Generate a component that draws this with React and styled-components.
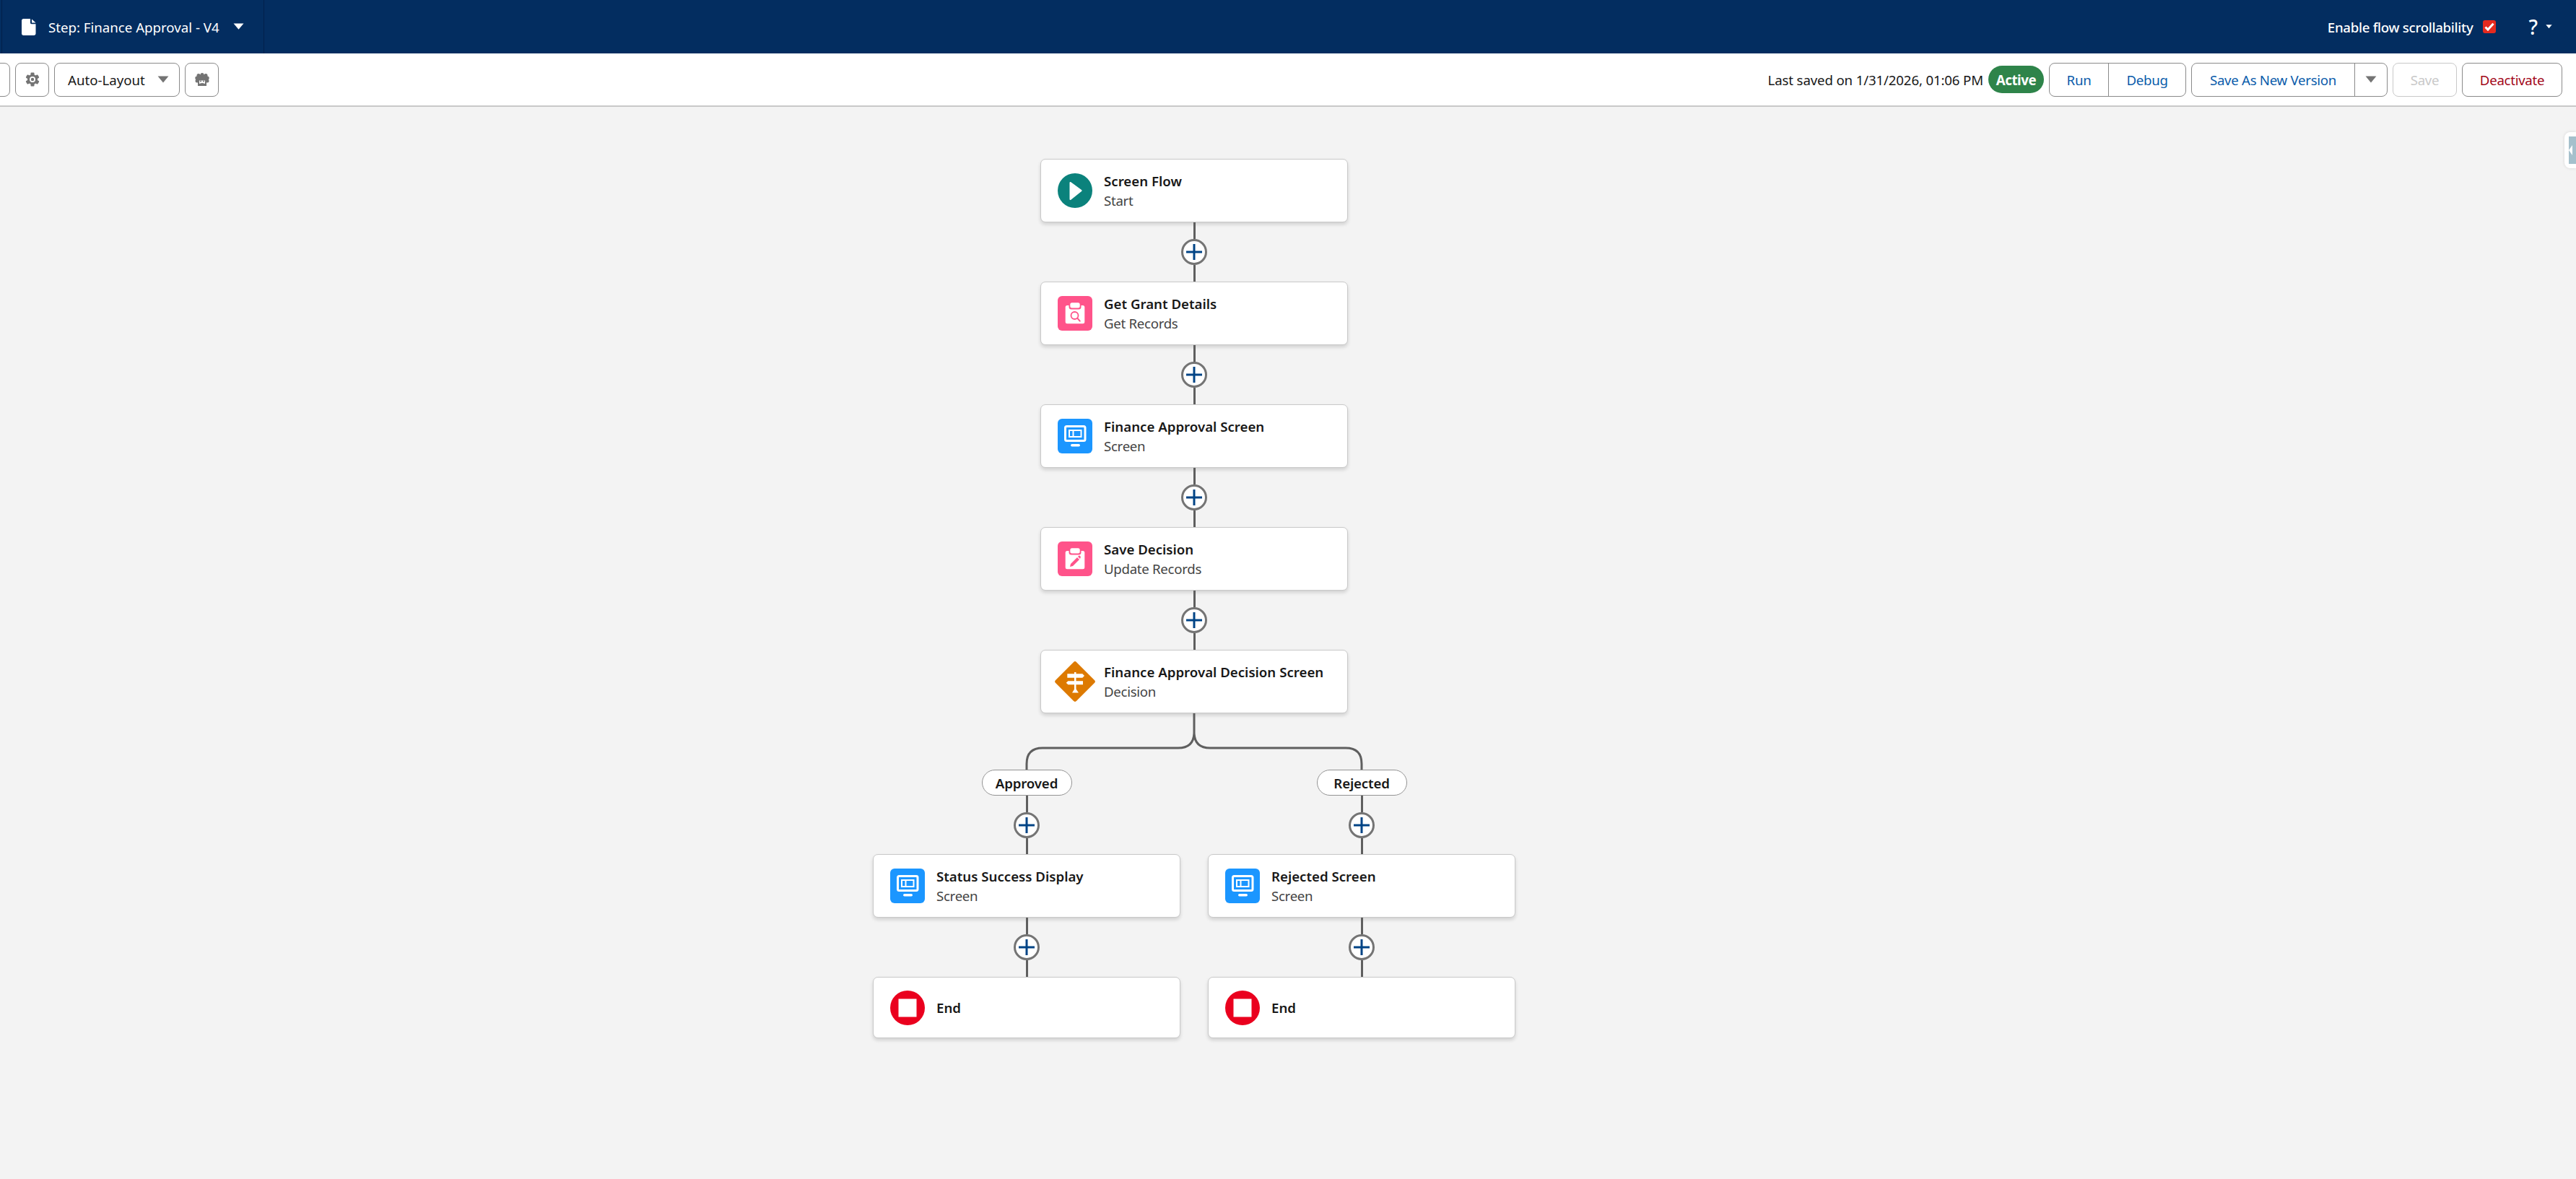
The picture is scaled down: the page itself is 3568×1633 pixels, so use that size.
import React from 'react';
import styled, { createGlobalStyle } from 'styled-components';

const GlobalStyle = createGlobalStyle`
	html, body {
		margin: 0;
		padding: 0;
		height: 100%;
		overflow: hidden;
		background: #f3f3f3;
		font-family: "Noto Sans", "Open Sans", Arial, sans-serif;
	}
	* {
		box-sizing: border-box;
	}
`;

const Page = styled.div`
	width: 3568px;
	height: 1633px;
	display: flex;
	flex-direction: column;
`;

const Header = styled.header`
	height: 74px;
	flex-shrink: 0;
	background: #032d60;
	color: #fff;
	display: flex;
	align-items: center;
	justify-content: space-between;
	padding: 0 33px 0 2px;
`;

const FlowTab = styled.div`
	width: 364px;
	height: 100%;
	display: flex;
	align-items: center;
	padding-left: 27px;
	border-left: 1px solid #02204a;
	border-right: 1px solid #02204a;
`;

const FlowName = styled.span`
	font-size: 18.67px;
	letter-spacing: 0;
	margin: 0 19px 0 17px;
	white-space: nowrap;
`;

const HeaderRight = styled.div`
	display: flex;
	align-items: center;
`;

const ScrollLabel = styled.span`
	font-size: 18.67px;
	font-weight: 500;
	letter-spacing: -0.3px;
	white-space: nowrap;
`;

const CheckBox = styled.span`
	width: 18px;
	height: 18px;
	margin-left: 14px;
	border-radius: 3px;
	background: #e52a1f;
	display: flex;
	align-items: center;
	justify-content: center;
`;

const HelpMark = styled.span`
	font-size: 28px;
	font-weight: 500;
	margin-left: 45px;
	margin-right: 11px;
	line-height: 1;
`;

const Toolbar = styled.div`
	height: 74px;
	flex-shrink: 0;
	background: #fff;
	border-bottom: 2px solid #c9c9c9;
	display: flex;
	align-items: center;
	padding: 0 19px 0 0;
	gap: 7px;
`;

const ToolButton = styled.button`
	width: 47px;
	height: 47px;
	padding: 0;
	flex-shrink: 0;
	background: #fff;
	border: 1.5px solid #8a8a8a;
	border-radius: 8px;
	display: flex;
	align-items: center;
	justify-content: center;
	margin-left: ${props => props.$offset || 0};
`;

const LayoutSelect = styled.button`
	width: 174px;
	height: 47px;
	padding: 0 14px 0 18px;
	background: #fff;
	border: 1.5px solid #8a8a8a;
	border-radius: 8px;
	display: flex;
	align-items: center;
	justify-content: space-between;
	font-family: inherit;
	font-size: 18.67px;
	letter-spacing: 0;
	color: #181818;
`;

const SavedInfo = styled.div`
	margin-left: auto;
	display: flex;
	align-items: center;
	gap: 7px;
`;

const SavedText = styled.span`
	font-size: 18.67px;
	letter-spacing: -0.15px;
	color: #181818;
	white-space: nowrap;
`;

const ActiveBadge = styled.span`
	width: 77px;
	height: 38px;
	border-radius: 19px;
	background: #2e844a;
	color: #fff;
	font-size: 18.67px;
	font-weight: 700;
	letter-spacing: -0.4px;
	display: flex;
	align-items: center;
	justify-content: center;
`;

const ButtonGroup = styled.div`
	height: 47px;
	display: flex;
	background: #fff;
	border: 1.5px solid #8a8a8a;
	border-radius: 8px;
	overflow: hidden;
`;

const GroupItem = styled.button`
	width: ${props => props.$width};
	height: 100%;
	padding: 0;
	background: none;
	border: none;
	border-left: ${props => (props.$first ? 'none' : '1.5px solid #8a8a8a')};
	display: flex;
	align-items: center;
	justify-content: center;
	font-family: inherit;
	font-size: 18.67px;
	letter-spacing: -0.3px;
	color: #0b5cab;
`;

const TextButton = styled.button`
	width: ${props => props.$width};
	height: 47px;
	padding: 0;
	background: #fff;
	border: 1.5px solid ${props => props.$border || '#8a8a8a'};
	border-radius: 8px;
	font-family: inherit;
	font-size: 18.67px;
	letter-spacing: -0.3px;
	color: ${props => props.$color};
`;

const Canvas = styled.main`
	flex: 1;
	position: relative;
	background: #f3f3f3;
	padding: 72px 0 0 1209px;
`;

const Flow = styled.div`
	width: 890px;
	display: flex;
	flex-direction: column;
	align-items: center;
`;

const Card = styled.div`
	width: ${props => props.$width || '426px'};
	height: ${props => props.$height || '88px'};
	background: #fff;
	border: 1.5px solid #c9c9c9;
	border-radius: 7px;
	box-shadow: 0 3px 5px rgba(0, 0, 0, 0.14);
	display: flex;
	align-items: center;
	padding-left: 23px;
	flex-shrink: 0;
`;

const IconSlot = styled.div`
	width: 48px;
	height: 48px;
	flex-shrink: 0;
	display: flex;
	align-items: center;
	justify-content: center;
`;

const CardText = styled.div`
	margin-left: 16px;
	display: flex;
	flex-direction: column;
`;

const CardTitle = styled.div`
	font-size: 18.67px;
	font-weight: 600;
	line-height: 27px;
	color: #181818;
	white-space: nowrap;
`;

const CardType = styled.div`
	font-size: 18.67px;
	line-height: 27px;
	letter-spacing: -0.3px;
	color: #444;
	white-space: nowrap;
`;

const Connector = styled.div`
	height: ${props => props.$height || '82px'};
	display: flex;
	flex-direction: column;
	align-items: center;
	flex-shrink: 0;
`;

const Wire = styled.div`
	flex: 1;
	width: 3px;
	background: #5f5f5f;
`;

const AddButton = styled.div`
	width: 36px;
	height: 36px;
	flex-shrink: 0;
	border-radius: 50%;
	border: 3px solid #747474;
	background: #fff;
	display: flex;
	align-items: center;
	justify-content: center;
`;

const ForkLines = styled.svg`
	display: block;
	flex-shrink: 0;
`;

const Branches = styled.div`
	width: 100%;
	display: flex;
	justify-content: space-between;
`;

const Branch = styled.div`
	width: 426px;
	display: flex;
	flex-direction: column;
	align-items: center;
`;

const BranchLabel = styled.div`
	width: 125px;
	height: 36px;
	background: #fff;
	border: 1.5px solid #939393;
	border-radius: 18px;
	display: flex;
	align-items: center;
	justify-content: center;
	font-size: 18.67px;
	font-weight: 600;
	letter-spacing: -0.15px;
	color: #181818;
`;

const SideHandle = styled.div`
	position: absolute;
	right: 0;
	top: 35px;
	width: 16px;
	height: 50px;
	background: #fff;
	border-radius: 8px 0 0 8px;
	box-shadow: 0 0 4px rgba(0, 0, 0, 0.12);
	padding: 6px 0 6px 6px;
	display: flex;
`;

const HandleFace = styled.div`
	flex: 1;
	background: #a5c0cc;
	display: flex;
	align-items: center;
`;

const DocIcon = () => (
	<svg width="20" height="23" viewBox="0 0 20 23">
		<path d="M2.5 0H12v5.5c0 1 .7 1.7 1.7 1.7H19.500V20.500c0 1.400-1.100 2.500-2.500 2.500H2.500C1.100 23 0 21.900 0 20.500V2.500C0 1.100 1.100 0 2.500 0Z" fill="#fff" />
		<path d="M14 .5 19.500 5.500H14Z" fill="#fff" />
	</svg>
);

const Caret = ({ size = 15, color = '#fff' }) => (
	<svg width={size} height={size * 0.62} viewBox="0 0 16 10">
		<path d="M.5.5h15L8 9.500Z" fill={color} />
	</svg>
);

const CheckMark = () => (
	<svg width="14" height="12" viewBox="0 0 14 12">
		<path d="M1.500 6.500 5 10 12.500 1.800" fill="none" stroke="#fff" strokeWidth="3" />
	</svg>
);

const HandleArrow = () => (
	<svg width="5" height="14" viewBox="0 0 5 14">
		<path d="M5 0v14L0 7Z" fill="#fff" />
	</svg>
);

const GearIcon = () => (
	<svg width="20" height="20" viewBox="0 0 20 20">
		<g fill="#747474">
			<rect x="7.500" y="0.500" width="5" height="19" rx="1" />
			<rect x="7.500" y="0.500" width="5" height="19" rx="1" transform="rotate(60 10 10)" />
			<rect x="7.500" y="0.500" width="5" height="19" rx="1" transform="rotate(120 10 10)" />
			<circle cx="10" cy="10" r="7" />
		</g>
		<circle cx="10" cy="10" r="4" fill="#fff" />
		<circle cx="10" cy="10" r="2.200" fill="#747474" />
	</svg>
);

const EinsteinIcon = () => (
	<svg width="20" height="18" viewBox="0 0 20 18">
		<g fill="#747474">
			<circle cx="10" cy="9" r="7" />
			<circle cx="3" cy="11" r="2.500" />
			<circle cx="2.800" cy="7" r="2.500" />
			<circle cx="5" cy="3.500" r="2.500" />
			<circle cx="10" cy="2.500" r="2.500" />
			<circle cx="15" cy="3.500" r="2.500" />
			<circle cx="17.200" cy="7" r="2.500" />
			<circle cx="17" cy="11" r="2.500" />
			<rect x="4" y="12" width="12" height="6" />
		</g>
		<path d="M6 10.500h8v4.500c-1 0-1.500-1-4-1s-3 1-4 1Z" fill="#fff" />
		<circle cx="8" cy="11.500" r="1" fill="#747474" />
		<circle cx="12" cy="11.500" r="1" fill="#747474" />
	</svg>
);

const StartIcon = () => (
	<svg width="48" height="48" viewBox="0 0 48 48">
		<circle cx="24" cy="24" r="24" fill="#0b827c" />
		<path d="M16.500 13.200c0-1 1-1.500 1.800-1L33 23c.8.500.8 1.600 0 2.100L18.300 36.800c-.8.600-1.800 0-1.800-1Z" fill="#fff" />
	</svg>
);

const RecordBase = ({ children }) => (
	<svg width="48" height="48" viewBox="0 0 48 48">
		<rect width="48" height="48" rx="6" fill="#ff538a" />
		<rect x="10.700" y="13" width="26.600" height="25.300" rx="2.500" fill="#fff" />
		<rect x="15.500" y="7" width="17" height="11.500" rx="3.500" fill="#ff538a" />
		<rect x="17.300" y="9.300" width="13.400" height="7.200" rx="2.500" fill="#fff" />
		{children}
	</svg>
);

const GetIcon = () => (
	<RecordBase>
		<circle cx="23.500" cy="27" r="5" fill="none" stroke="#ff538a" strokeWidth="1.800" />
		<path d="M27.200 30.700l3.500 4" stroke="#ff538a" strokeWidth="2" strokeLinecap="round" />
	</RecordBase>
);

const UpdateIcon = () => (
	<RecordBase>
		<path d="M17 35l1-4 9-9 3 3-9 9Z" fill="#ff538a" />
		<path d="M28 21l1.200-1.200c.4-.4 1-.4 1.400 0l1 1c.4.4.4 1 0 1.400L31 24Z" fill="#ff538a" />
	</RecordBase>
);

const ScreenIcon = () => (
	<svg width="48" height="48" viewBox="0 0 48 48">
		<rect width="48" height="48" rx="6" fill="#1b96ff" />
		<rect x="10.500" y="10.500" width="27.500" height="20" rx="2" fill="none" stroke="#fff" strokeWidth="3" />
		<rect x="15" y="15" width="18.500" height="11" fill="#fff" />
		<rect x="17" y="17" width="3.500" height="7" fill="#1b96ff" />
		<rect x="22.500" y="17" width="9" height="7" fill="#1b96ff" />
		<rect x="18" y="35" width="13" height="3.600" rx="1.800" fill="#fff" />
	</svg>
);

const DecisionIcon = () => (
	<svg width="56" height="56" viewBox="0 0 56 56" style={{ flexShrink: 0 }}>
		<rect x="7.500" y="7.500" width="41" height="41" rx="3" transform="rotate(45 28 28)" fill="#dd7a01" />
		<g fill="#fff">
			<rect x="27" y="15" width="2.500" height="24" />
			<path d="M17.300 17.300h21l2.700 2.700-2.700 2.700h-21Z" />
			<path d="M39 27.300H18.400l-2.700 2.500 2.700 2.500H39Z" />
			<path d="M24 43.500l4.200-6.800 4.800 6.800Z" />
		</g>
	</svg>
);

const EndIcon = () => (
	<svg width="48" height="48" viewBox="0 0 48 48">
		<circle cx="24" cy="24" r="24" fill="#ea001e" />
		<rect x="11.500" y="11.500" width="25" height="25" fill="#fff" />
	</svg>
);

const PlusIcon = () => (
	<svg width="22" height="22" viewBox="0 0 22 22">
		<path d="M11 0v22M0 11h22" stroke="#014486" strokeWidth="3" />
	</svg>
);

const AddConnector = ({ height }) => (
	<Connector $height={height}>
		<Wire />
		<AddButton>
			<PlusIcon />
		</AddButton>
		<Wire />
	</Connector>
);

const FlowCard = ({ icon, title, type, height }) => (
	<Card $height={height}>
		<IconSlot>{icon}</IconSlot>
		<CardText>
			<CardTitle>{title}</CardTitle>
			{type && <CardType>{type}</CardType>}
		</CardText>
	</Card>
);

const BranchPath = ({ label, screen }) => (
	<Branch>
		<BranchLabel>{label}</BranchLabel>
		<AddConnector height="81px" />
		<FlowCard icon={<ScreenIcon />} title={screen} type="Screen" />
		<AddConnector />
		<FlowCard icon={<EndIcon />} title="End" height="85px" />
	</Branch>
);

const App = () => {
	return (
		<Page>
			<GlobalStyle />
			<Header>
				<FlowTab>
					<DocIcon />
					<FlowName>Step: Finance Approval - V4</FlowName>
					<Caret />
				</FlowTab>
				<HeaderRight>
					<ScrollLabel>Enable flow scrollability</ScrollLabel>
					<CheckBox>
						<CheckMark />
					</CheckBox>
					<HelpMark>?</HelpMark>
					<Caret size={9} />
				</HeaderRight>
			</Header>
			<Toolbar>
				<ToolButton $offset="-33px" />
				<ToolButton>
					<GearIcon />
				</ToolButton>
				<LayoutSelect>
					Auto-Layout
					<Caret size={16} color="#747474" />
				</LayoutSelect>
				<ToolButton>
					<EinsteinIcon />
				</ToolButton>
				<SavedInfo>
					<SavedText>Last saved on 1/31/2026, 01:06 PM</SavedText>
					<ActiveBadge>Active</ActiveBadge>
				</SavedInfo>
				<ButtonGroup>
					<GroupItem $first $width="81px">Run</GroupItem>
					<GroupItem $width="107px">Debug</GroupItem>
				</ButtonGroup>
				<ButtonGroup>
					<GroupItem $first $width="225px">Save As New Version</GroupItem>
					<GroupItem $width="45px">
						<Caret size={16} color="#747474" />
					</GroupItem>
				</ButtonGroup>
				<TextButton $width="89px" $border="#c9c9c9" $color="#c9c9c9">Save</TextButton>
				<TextButton $width="139px" $color="#a3081a">Deactivate</TextButton>
			</Toolbar>
			<Canvas>
				<Flow>
					<FlowCard icon={<StartIcon />} title="Screen Flow" type="Start" />
					<AddConnector />
					<FlowCard icon={<GetIcon />} title="Get Grant Details" type="Get Records" />
					<AddConnector />
					<FlowCard icon={<ScreenIcon />} title="Finance Approval Screen" type="Screen" />
					<AddConnector />
					<FlowCard icon={<UpdateIcon />} title="Save Decision" type="Update Records" />
					<AddConnector />
					<FlowCard icon={<DecisionIcon />} title="Finance Approval Decision Screen" type="Decision" />
					<ForkLines width="890" height="78" viewBox="0 0 890 78">
						<path
							d="M445 0V26Q445 48 423 48H235Q213 48 213 70V78M445 26Q445 48 467 48H655Q677 48 677 70V78"
							fill="none"
							stroke="#5f5f5f"
							strokeWidth="3"
						/>
					</ForkLines>
					<Branches>
						<BranchPath label="Approved" screen="Status Success Display" />
						<BranchPath label="Rejected" screen="Rejected Screen" />
					</Branches>
				</Flow>
				<SideHandle>
					<HandleFace>
						<HandleArrow />
					</HandleFace>
				</SideHandle>
			</Canvas>
		</Page>
	);
};

export default App;
